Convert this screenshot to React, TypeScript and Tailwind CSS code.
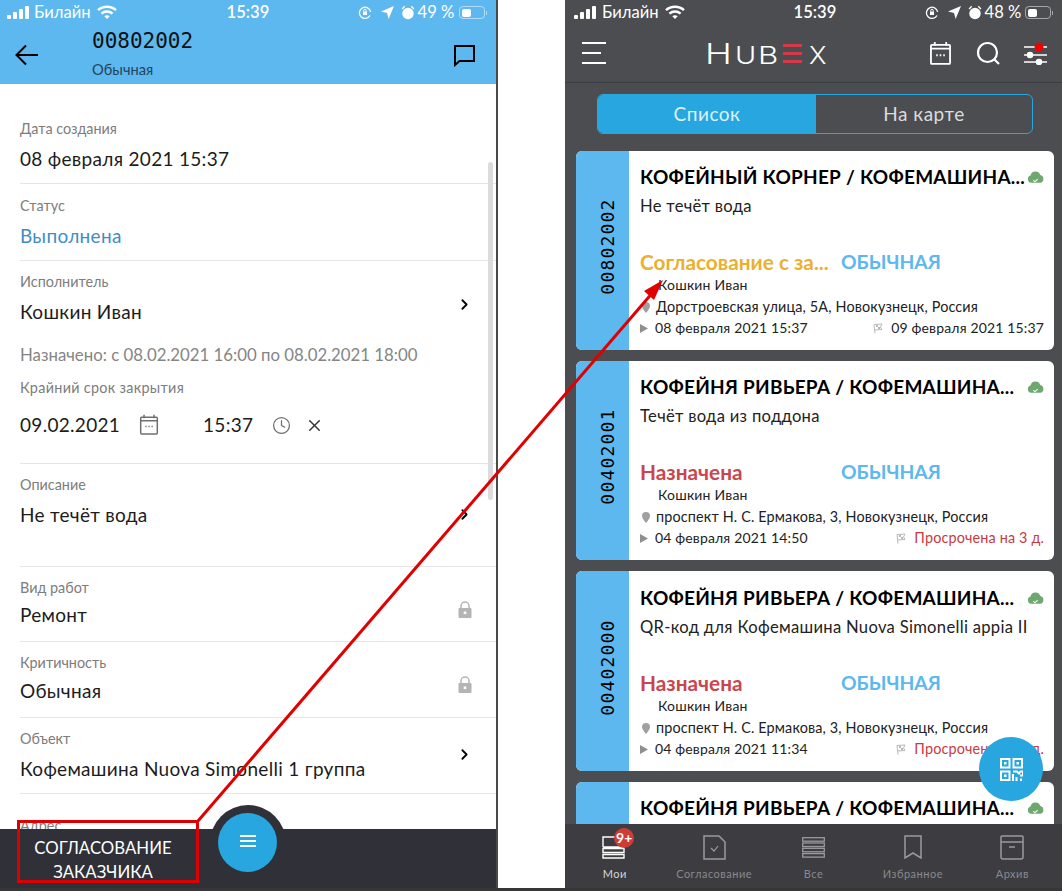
import React from "react";
import { ChevronRight, X, Clock } from "lucide-react";

const FONT = "font-['Lato','Open_Sans',sans-serif]";

function Signal({ c }: { c: string }) {
  return (
    <svg width="22" height="14" viewBox="0 0 22 14" fill={c}>
      <rect x="0" y="9" width="4" height="4" rx="1" />
      <rect x="6" y="6" width="4" height="7" rx="1" />
      <rect x="12" y="3" width="4" height="10" rx="1" />
      <rect x="18" y="0" width="4" height="13" rx="1" />
    </svg>
  );
}
function Wifi({ c }: { c: string }) {
  return (
    <svg width="20" height="15" viewBox="0 0 20 15" fill="none" stroke={c} strokeWidth="2.4">
      <path d="M1 5.2c5-4.6 13-4.6 18 0" />
      <path d="M4.4 8.6c3.2-2.8 8-2.8 11.2 0" />
      <path d="M10 14l2.700-2.800c-1.600-1.200-3.800-1.200-5.400 0z" fill={c} stroke="none" />
    </svg>
  );
}
function StatusIcons({ c }: { c: string }) {
  return (
    <>
      <svg width="14" height="14" viewBox="0 0 14 14" fill="none" stroke={c} strokeWidth="1.3">
        <path d="M12 9.500A5.600 5.600 0 1 1 12.600 6" />
        <rect x="5" y="5.500" width="4" height="3.500" fill={c} stroke="none" />
        <path d="M5.800 5.500V4.400a1.200 1.200 0 0 1 2.400 0v1.100" strokeWidth="1" />
      </svg>
      <svg width="13" height="13" viewBox="0 0 13 13" fill={c} className="ml-[9px]">
        <path d="M13 0L7.600 13 6 7 0 5.400z" />
      </svg>
      <svg width="14" height="15" viewBox="0 0 14 15" fill={c} className="ml-[7px]">
        <circle cx="7" cy="8.500" r="5.700" />
        <path d="M0.600 3.400L3.200.8l1 1L1.600 4.400zM13.400 3.400L10.800.8l-1 1 2.600 2.600z" />
        <path d="M7 5v3.600h2.500" stroke="#fff" strokeOpacity=".5" fill="none" />
      </svg>
    </>
  );
}
function Battery({ c, level }: { c: string; level: number }) {
  return (
    <div className="flex items-center">
      <div className="w-[26px] h-[13px] rounded-[4px] border border-white/50 p-[1.5px]">
        <div className="h-full rounded-[2px]" style={{ width: `${level}%`, backgroundColor: c }} />
      </div>
      <div className="w-[1px] h-[4px] bg-white/50 ml-[1px]" />
    </div>
  );
}
function CalendarIcon({ c, size, sw }: { c: string; size: number; sw: number }) {
  return (
    <svg width={size} height={size * 1.08} viewBox="0 0 24 26" fill="none" stroke={c} strokeWidth={sw}>
      <rect x="2" y="4" width="20" height="20" rx="1" />
      <path d="M2 8h20M6 1v4M18 1v4" />
      <path d="M7.500 15h1.600M11.200 15h1.600M14.900 15h1.600" strokeWidth={sw * 1.1} />
    </svg>
  );
}

function Field({
  label,
  value,
  valueClass = "text-[#1c1c1c]",
  icon,
  h,
  top = 12,
  gap = 9,
  border = true,
}: {
  label: string;
  value: string;
  valueClass?: string;
  icon?: React.ReactNode;
  h: number;
  top?: number;
  gap?: number;
  border?: boolean;
}) {
  return (
    <div
      className={`relative ml-[20px] ${border ? "border-b border-[#e6e6e6]" : ""} shrink-0`}
      style={{ height: h, paddingTop: top }}
    >
      <div className="text-[14.4px] leading-[18px] text-[#7d7d7d]">{label}</div>
      <div className={`text-[19px] leading-[24px] tracking-[0.3px] ${valueClass}`} style={{ marginTop: gap }}>
        {value}
      </div>
      {icon}
    </div>
  );
}

function Chev({ top }: { top: number }) {
  return (
    <ChevronRight size={17} strokeWidth={2.6} className="absolute right-[23px] text-black" style={{ top }} />
  );
}
function LockIcon() {
  return (
    <svg width="14" height="17" viewBox="0 0 14 17" className="absolute right-[24px] top-[34px]">
      <path d="M3 8V5a4 4 0 0 1 8 0v3" fill="none" stroke="#b4b4b4" strokeWidth="1.500" />
      <rect x="0.500" y="7" width="13" height="10" rx="1" fill="#b4b4b4" />
      <rect x="5.700" y="10.500" width="2.600" height="2.600" fill="#fff" />
    </svg>
  );
}

function LeftPhone() {
  return (
    <div className="relative w-[498px] h-[888px] shrink-0 bg-white border-r-2 border-[#4a4a4a] flex flex-col overflow-hidden">
      <div className="h-[84px] shrink-0 bg-[#5cb8ef]">
        <div className="h-[25px] flex items-center pl-[7px] text-white whitespace-nowrap">
          <Signal c="#fff" />
          <span className="ml-[5px] text-[16.6px]">Билайн</span>
          <span className="ml-[6px]"><Wifi c="#fff" /></span>
          <span className="ml-[110px] text-[16.6px] font-semibold w-[60px]">15:39</span>
          <span className="ml-[71px] flex items-center"><StatusIcons c="#fff" /></span>
          <span className="ml-[3px] text-[16.6px]">49 %</span>
          <span className="ml-[5px]"><Battery c="#fff" level={45} /></span>
        </div>
        <div className="flex items-start">
          <svg width="24" height="22" viewBox="0 0 24 22" fill="none" stroke="#000" strokeWidth="2" className="ml-[15px] mt-[19px]">
            <path d="M23 11H2M11 1.500L1.500 11l9.500 9.500" />
          </svg>
          <div className="ml-[53px] mt-[6px]">
            <div className="font-['DejaVu_Sans_Mono',monospace] text-[21px] leading-[20px] text-[#111]">00802002</div>
            <div className="mt-[10px] text-[14.7px] leading-[16px] text-[#24445c]">Обычная</div>
          </div>
          <svg width="23" height="23" viewBox="0 0 23 23" fill="none" stroke="#000" strokeWidth="2" className="ml-auto mr-[20px] mt-[19px]">
            <path d="M2 2h19v15H6.500L2 21z" />
          </svg>
        </div>
      </div>
      <div className="h-[19px] shrink-0" />
      <Field label="Дата создания" value="08 февраля 2021 15:37" h={81} top={17} />
      <Field label="Статус" value="Выполнена" valueClass="text-[#3f8dc4]" h={77} top={13} />
      <Field label="Исполнитель" value="Кошкин Иван" h={83} border={false} icon={<Chev top={35} />} />
      <div className="ml-[20px] h-[22px] shrink-0 text-[16.8px] leading-[22px] text-[#858585] whitespace-nowrap">
        Назначено: с 08.02.2021 16:00 по 08.02.2021 18:00
      </div>
      <div className="relative ml-[20px] h-[98px] shrink-0 border-b border-[#e6e6e6] pt-[13px]">
        <div className="text-[14.4px] leading-[18px] text-[#7d7d7d] tracking-[0.3px]">Крайний срок закрытия</div>
        <div className="mt-[16px] flex items-center text-[#1c1c1c] text-[19px] leading-[24px] tracking-[0.3px]">
          <span className="w-[119px]">09.02.2021</span>
          <CalendarIcon c="#707070" size={20} sw={1.8} />
          <span className="ml-[44px] w-[69px]">15:37</span>
          <Clock size={19} strokeWidth={1.6} className="text-[#707070]" />
          <X size={19} strokeWidth={1.8} className="ml-[14px] text-[#333]" />
        </div>
      </div>
      <Field label="Описание" value="Не течёт вода" h={103} icon={<Chev top={42} />} />
      <Field label="Вид работ" value="Ремонт" h={75} gap={6} icon={<LockIcon />} />
      <Field label="Критичность" value="Обычная" h={76} gap={7} icon={<LockIcon />} />
      <Field label="Объект" value="Кофемашина Nuova Simonelli 1 группа" h={76} icon={<Chev top={28} />} />
      <div className="ml-[20px] pt-[23px] text-[14.4px] leading-[18px] text-[#7d7d7d]">Адрес</div>
      <div className="absolute right-[3px] top-[162px] w-[5px] h-[338px] rounded-full bg-[#dcdcdc]" />
      <div className="absolute left-0 right-0 bottom-0 h-[59px] bg-[#2f3038] text-white">
        <div className="ml-[3px] w-[200px] pt-[7px] text-center text-[16.8px] leading-[24px]">
          <div>СОГЛАСОВАНИЕ</div>
          <div>ЗАКАЗЧИКА</div>
        </div>
      </div>
      <div className="absolute left-[210px] top-[805px] w-[76px] h-[76px] rounded-full bg-[#2f3038]" />
      <div className="absolute left-[218px] top-[813px] w-[59px] h-[59px] rounded-full bg-[#27a6e0] flex flex-col items-center justify-center gap-[3px] pb-[3px]">
        <div className="w-[16px] h-[2px] bg-white" />
        <div className="w-[16px] h-[2px] bg-white" />
        <div className="w-[16px] h-[2px] bg-white" />
      </div>
    </div>
  );
}

function Cloud() {
  return (
    <svg width="17" height="14" viewBox="0 0 16 13" className="shrink-0">
      <path d="M4 12A3.600 3.600 0 0 1 3.300 5 4.800 4.800 0 0 1 12.500 4.600 3.800 3.800 0 0 1 12.500 12z" fill="#6fa86f" />
      <path d="M6 9.500l1.500 1.500 2.500-2.500" stroke="#fff" strokeWidth="1" fill="none" />
    </svg>
  );
}
function Flag({ c = "#b8b8b8" }: { c?: string }) {
  return (
    <svg width="10" height="11" viewBox="0 0 10 11" fill="none" stroke={c} strokeWidth="1">
      <path d="M2 10.500L1 1.500 9 1 7.500 4 9 6.500 2 7" />
      <path d="M3 2v2h2v2h2V4H5V2" fill={c} stroke="none" />
    </svg>
  );
}

type CardData = {
  id?: string;
  title: string;
  desc?: string;
  status?: string;
  statusClass?: string;
  addr?: string;
  start?: string;
  end?: string;
  endClass?: string;
  h: number;
  pt?: number;
};

function Card({ d }: { d: CardData }) {
  return (
    <div className="flex rounded-[6px] bg-white overflow-hidden shrink-0" style={{ height: d.h }}>
      <div className="w-[53px] shrink-0 bg-[#5cb8ef] flex items-center justify-center">
        {d.id && (
          <span className="-rotate-90 font-['DejaVu_Sans_Mono',monospace] text-[18px] tracking-[1.2px] text-black whitespace-nowrap translate-x-[5px] -translate-y-[4px]">
            {d.id}
          </span>
        )}
      </div>
      <div className="flex-1 min-w-0 pl-[11px] pr-[10px]" style={{ paddingTop: d.pt ?? 14 }}>
        <div className="flex items-center justify-between h-[24px]">
          <span className="text-[19px] font-bold leading-[24px] tracking-[0.25px] text-black whitespace-nowrap">{d.title}</span>
          <Cloud />
        </div>
        {d.id && (
          <>
            <div className="mt-[5px] h-[24px] text-[16.6px] leading-[24px] tracking-[0.3px] text-[#222] whitespace-nowrap">{d.desc}</div>
            <div className="mt-[32px] flex h-[24px] items-center font-bold leading-[24px]">
              <span className={`w-[201px] text-[20.8px] whitespace-nowrap ${d.statusClass}`}>{d.status}</span>
              <span className="text-[19.3px] text-[#5cb8ef]">ОБЫЧНАЯ</span>
            </div>
            <div className="mt-[1px] ml-[18px] h-[20px] text-[14px] leading-[20px] tracking-[0.2px] text-[#222]">Кошкин Иван</div>
            <div className="mt-[2px] flex items-center h-[20px] text-[14.4px] leading-[20px] tracking-[0.15px] text-[#222] whitespace-nowrap">
              <svg width="8" height="11" viewBox="0 0 8 11" fill="#a0a0a0" className="ml-[2px] mr-[6px]">
                <path d="M4 0a4 4 0 0 1 4 4c0 2.500-4 7-4 7S0 6.500 0 4a4 4 0 0 1 4-4z" />
              </svg>
              {d.addr}
            </div>
            <div className="mt-[1px] flex items-center h-[20px] text-[14px] leading-[20px] tracking-[0.15px] text-[#222] whitespace-nowrap">
              <svg width="8" height="9" viewBox="0 0 8 9" fill="#8f8f8f" className="mr-[7px]">
                <path d="M0 0l8 4.500-8 4.500z" />
              </svg>
              {d.start}
              <span className="ml-auto flex items-center gap-[8px]">
                <Flag />
                <span className={d.endClass}>{d.end}</span>
              </span>
            </div>
          </>
        )}
      </div>
    </div>
  );
}

const RED = "text-[#c9464e]";
const cards: CardData[] = [
  {
    id: "00802002",
    title: "КОФЕЙНЫЙ КОРНЕР / КОФЕМАШИНА...",
    desc: "Не течёт вода",
    status: "Согласование с за...",
    statusClass: "text-[#ebb02f]",
    addr: "Дорстроевская улица, 5А, Новокузнецк, Россия",
    start: "08 февраля 2021 15:37",
    end: "09 февраля 2021 15:37",
    endClass: "text-[#222]",
    h: 199,
  },
  {
    id: "00402001",
    title: "КОФЕЙНЯ РИВЬЕРА / КОФЕМАШИНА...",
    desc: "Течёт вода из поддона",
    status: "Назначена",
    statusClass: RED,
    addr: "проспект Н. С. Ермакова, 3, Новокузнецк, Россия",
    start: "04 февраля 2021 14:50",
    end: "Просрочена на 3 д.",
    endClass: "text-[#c93a3f] text-[14.4px]",
    h: 199,
  },
  {
    id: "00402000",
    title: "КОФЕЙНЯ РИВЬЕРА / КОФЕМАШИНА...",
    desc: "QR-код для Кофемашина Nuova Simonelli appia II",
    status: "Назначена",
    statusClass: RED,
    addr: "проспект Н. С. Ермакова, 3, Новокузнецк, Россия",
    start: "04 февраля 2021 11:34",
    end: "Просрочена на 3 д.",
    endClass: "text-[#c93a3f] text-[14.4px]",
    h: 200,
    pt: 15,
  },
  {
    title: "КОФЕЙНЯ РИВЬЕРА / КОФЕМАШИНА...",
    h: 60,
  },
];

function TabItem({ icon, label, active }: { icon: React.ReactNode; label: string; active?: boolean }) {
  return (
    <div className="flex-1 flex flex-col items-center relative">
      <div className="h-[30px] flex items-center">{icon}</div>
      <div className={`mt-[5px] text-[11px] leading-[14px] tracking-[0.5px] whitespace-nowrap ${active ? "text-[#d8d8d8]" : "text-[#8a8a8e]"}`}>
        {label}
      </div>
    </div>
  );
}

function RightPhone() {
  const g = "#9a9a9e";
  return (
    <div className="relative flex-1 min-w-0 h-[888px] bg-[#4c4d51] flex flex-col overflow-hidden">
      <div className="h-[83px] shrink-0 border-b border-[#3b3c44] text-white">
        <div className="h-[25px] flex items-center pl-[9px] whitespace-nowrap">
          <Signal c="#fff" />
          <span className="ml-[6px] text-[16.6px]">Билайн</span>
          <span className="ml-[6px]"><Wifi c="#fff" /></span>
          <span className="ml-[109px] w-[60px] text-[16.6px] font-semibold">15:39</span>
          <span className="ml-[71px] flex items-center"><StatusIcons c="#fff" /></span>
          <span className="ml-[3px] text-[16.6px]">48 %</span>
          <span className="ml-[4px]"><Battery c="#fff" level={45} /></span>
        </div>
        <div className="flex items-center h-[58px] pb-[2px]">
          <div className="ml-[17px] w-[24px] flex flex-col gap-[8px]">
            <div className="h-[2px] w-[24px] bg-white" />
            <div className="h-[2px] w-[19px] bg-white" />
            <div className="h-[2px] w-[24px] bg-white" />
          </div>
          <div className="ml-[99px] w-[122px] flex items-baseline text-white font-['Inter',sans-serif] font-light leading-none">
            <span className="text-[29px] scale-x-[1.25] origin-left w-[30px]">H</span>
            <span className="text-[24px] scale-x-[1.2] origin-left w-[23px]">U</span>
            <span className="text-[24px] scale-x-[1.3] origin-left w-[25px]">B</span>
            <span className="self-end mb-[5px] w-[19px] flex flex-col gap-[5px]">
              <span className="h-[3px] bg-[#d63a4a]" />
              <span className="h-[3px] bg-[#d63a4a]" />
              <span className="h-[3px] bg-[#d63a4a]" />
            </span>
            <span className="ml-[7px] text-[24px] scale-x-[1.1] origin-left w-[17px]">X</span>
          </div>
          <span className="ml-[102px]"><CalendarIcon c="#fff" size={23} sw={1.9} /></span>
          <svg width="25" height="25" viewBox="0 0 25 25" fill="none" stroke="#fff" strokeWidth="2.200" className="ml-[24px]">
            <circle cx="11.500" cy="11.500" r="9.500" />
            <path d="M18 18l5 5" />
          </svg>
          <svg width="23" height="24" viewBox="0 0 23 24" fill="none" stroke="#fff" strokeWidth="1.500" className="ml-[23px] relative">
            <path d="M0 6h23M0 14h23M0 21h23" />
            <circle cx="6" cy="14" r="2.500" fill="#fff" />
            <circle cx="15" cy="21" r="2.500" fill="#fff" />
            <circle cx="15" cy="6" r="4.500" fill="#f00000" stroke="none" />
          </svg>
        </div>
      </div>
      <div className="ml-[32px] mr-[29px] mt-[11px] h-[40px] shrink-0 rounded-[6px] border border-[#27a6e0] flex text-[19px] tracking-[0.5px]">
        <div className="w-[218px] bg-[#27a6e0] rounded-l-[5px] text-center leading-[38px] text-[#dff2fb]">Список</div>
        <div className="flex-1 text-center leading-[38px] text-[#dcdcdc]">На карте</div>
      </div>
      <div className="mt-[17px] ml-[11px] mr-[8px] flex flex-col gap-[11px]">
        {cards.map((c, i) => (
          <Card key={i} d={c} />
        ))}
      </div>
      <div className="absolute right-[19px] top-[737px] w-[64px] h-[64px] rounded-full bg-[#27a6e0] flex items-center justify-center">
        <svg width="23" height="23" viewBox="0 0 23 23" fill="none" stroke="#fff" strokeWidth="2">
          <rect x="1" y="1" width="8.500" height="8.500" />
          <rect x="13.500" y="1" width="8.500" height="8.500" />
          <rect x="1" y="13.500" width="8.500" height="8.500" />
          <rect x="4" y="4" width="2.500" height="2.500" fill="#fff" stroke="none" />
          <rect x="16.500" y="4" width="2.500" height="2.500" fill="#fff" stroke="none" />
          <rect x="4" y="16.500" width="2.500" height="2.500" fill="#fff" stroke="none" />
          <path d="M13 13.500h4l2 2 1.500-2H23v4h-3M13 16v7M16.500 19v4M21 20.500V23" strokeWidth="2" />
        </svg>
      </div>
      <div className="absolute left-0 right-0 bottom-0 h-[64px] bg-[#3c3c41] flex pt-[8px]">
        <TabItem
          active
          label="Мои"
          icon={
            <div className="relative">
              <svg width="23" height="24" viewBox="0 0 23 24" fill="none" stroke="#fff" strokeWidth="1.400" className="-mt-[1px] -ml-[2px]">
                <path d="M1 12V2h17" />
                <path d="M1 12h21M1 13.500h21v4H1zM1 19.500h21v3.500H1z" />
              </svg>
              <div className="absolute -top-[8px] left-[10px] h-[20px] w-[20px] rounded-full bg-[#cf3b35] text-white text-[14px] font-bold text-center leading-[20px]">
                9+
              </div>
            </div>
          }
        />
        <TabItem
          label="Согласование"
          icon={
            <svg width="23" height="25" viewBox="0 0 23 25" fill="none" stroke={g} strokeWidth="1.500">
              <path d="M1 1h15l6 6v17H1z" />
              <path d="M8 13l3 3 4-5" strokeWidth="1.200" />
            </svg>
          }
        />
        <TabItem
          label="Все"
          icon={
            <svg width="23" height="21" viewBox="0 0 23 21" fill="none" stroke={g} strokeWidth="1.300">
              <rect x="0.700" y="0.700" width="21.600" height="3.500" />
              <rect x="0.700" y="6" width="21.600" height="3.500" />
              <rect x="0.700" y="11.300" width="21.600" height="3.500" />
              <rect x="0.700" y="16.600" width="21.600" height="3.500" />
            </svg>
          }
        />
        <TabItem
          label="Избранное"
          icon={
            <svg width="18" height="24" viewBox="0 0 18 24" fill="none" stroke={g} strokeWidth="1.500">
              <path d="M1 1h16v22l-8-5-8 5z" />
            </svg>
          }
        />
        <TabItem
          label="Архив"
          icon={
            <svg width="24" height="25" viewBox="0 0 24 25" fill="none" stroke={g} strokeWidth="1.500">
              <path d="M1 2a1 1 0 0 1 1-1h20a1 1 0 0 1 1 1v20a2 2 0 0 1-2 2H3a2 2 0 0 1-2-2z" />
              <path d="M1 7h22M9 12h6" />
            </svg>
          }
        />
      </div>
    </div>
  );
}

export default function App() {
  return (
    <div className={`relative w-[1062px] h-[891px] overflow-hidden bg-white ${FONT}`}>
      <div className="flex h-[888px]">
        <LeftPhone />
        <div className="w-[67px] shrink-0 bg-white" />
        <RightPhone />
      </div>
      <div className="h-[3px] bg-[#363636]" />
      <div className="absolute left-[17px] top-[820px] w-[182px] h-[63px] border-[3px] border-[#dc0000]" />
      <svg className="absolute inset-0 pointer-events-none" width="1062" height="891" viewBox="0 0 1062 891" fill="none">
        <path d="M198 821L654 291" stroke="#e00000" strokeWidth="3" />
        <path d="M663 280L644 291 654 300z" fill="#e00000" />
      </svg>
    </div>
  );
}
